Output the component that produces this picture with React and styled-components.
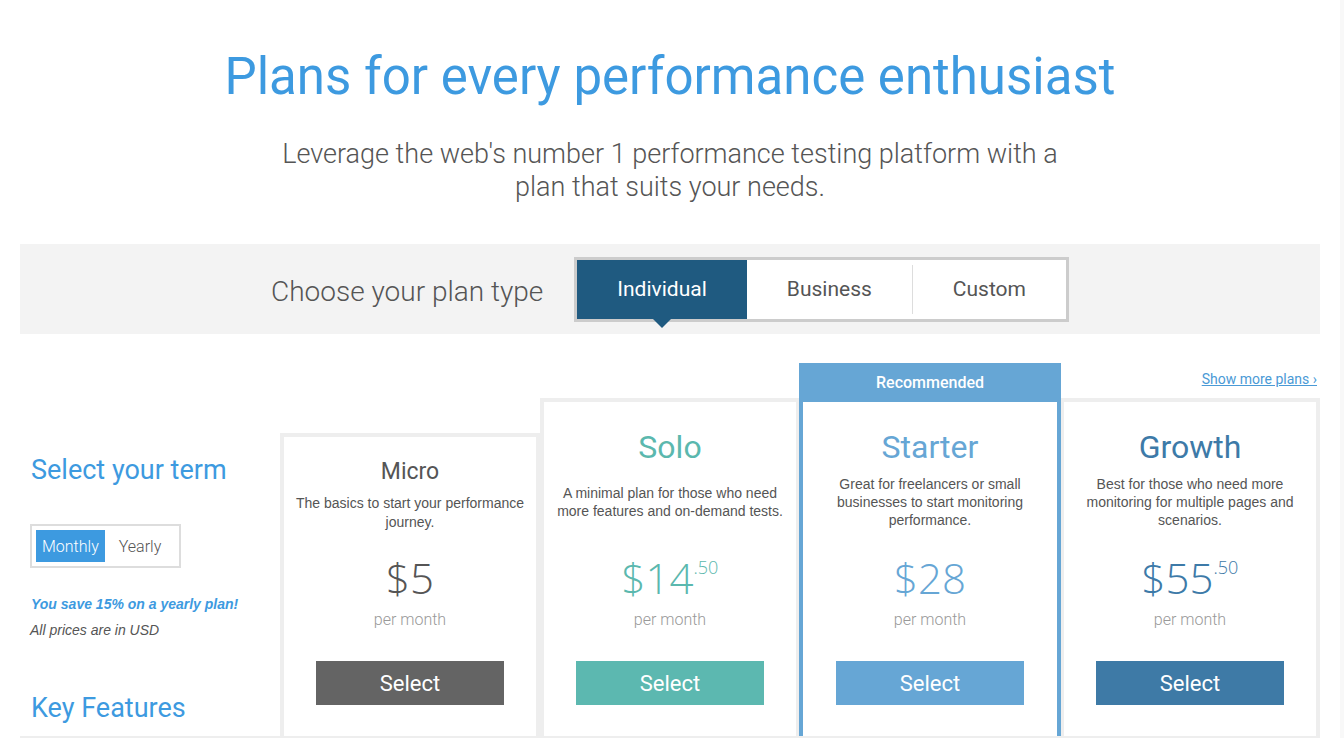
import React, { useState } from 'react'
import styled, { createGlobalStyle } from 'styled-components'

const GlobalStyle = createGlobalStyle`
    html, body {
        margin: 0;
        padding: 0;
        background: #f8f8f8;
    }
    body {
        font-family: Roboto, "Liberation Sans", sans-serif;
        overflow: hidden;
    }
`

const plans = [
    {
        name: 'Micro',
        small: true,
        desc: 'The basics to start your performance journey.',
        dollars: '5',
        color: '#555555',
        button: '#646464',
        height: 303,
    },
    {
        name: 'Solo',
        desc: 'A minimal plan for those who need more features and on-demand tests.',
        dollars: '14',
        cents: '.50',
        color: '#5bb8ae',
        button: '#5cb8b0',
        height: 338,
    },
    {
        name: 'Starter',
        featured: true,
        desc: 'Great for freelancers or small businesses to start monitoring performance.',
        dollars: '28',
        color: '#66a6d5',
        button: '#66a6d5',
        height: 334,
    },
    {
        name: 'Growth',
        more: true,
        desc: 'Best for those who need more monitoring for multiple pages and scenarios.',
        dollars: '55',
        cents: '.50',
        color: '#3d7aa8',
        button: '#3e7aa6',
        height: 338,
    },
]

function PlanCard({ plan }) {
    return (
        <Card height={plan.height} accent={plan.featured ? '#66a6d5' : '#eeeeee'} flat={plan.featured} small={plan.small}>
            <PlanName color={plan.color} small={plan.small}>{plan.name}</PlanName>
            <PlanDesc small={plan.small}>{plan.desc}</PlanDesc>
            <Bottom>
                <Price color={plan.color}>
                    <Amount>${plan.dollars}</Amount>
                    {plan.cents && <Cents>{plan.cents}</Cents>}
                </Price>
                <PerMonth>per month</PerMonth>
                <SelectButton bg={plan.button}>Select</SelectButton>
            </Bottom>
        </Card>
    )
}

function App() {
    const [planType, setPlanType] = useState('Individual')
    const [term, setTerm] = useState('Monthly')

    return (
        <Page>
            <GlobalStyle />
            <Hero>
                <Title>Plans for every performance enthusiast</Title>
                <Lead>Leverage the web's number 1 performance testing platform with a plan that suits your needs.</Lead>
            </Hero>

            <TypeBand>
                <BandLabel>Choose your plan type</BandLabel>
                <Tabs>
                    <Tab active={planType === 'Individual'} onClick={() => setPlanType('Individual')}>Individual</Tab>
                    <Tab active={planType === 'Business'} onClick={() => setPlanType('Business')}>Business</Tab>
                    <TabDivider />
                    <Tab active={planType === 'Custom'} onClick={() => setPlanType('Custom')}>Custom</Tab>
                </Tabs>
            </TypeBand>

            <PlansRow>
                <TermColumn>
                    <SideHeading>Select your term</SideHeading>
                    <TermToggle>
                        <TermOption active={term === 'Monthly'} onClick={() => setTerm('Monthly')}>Monthly</TermOption>
                        <TermOption active={term === 'Yearly'} onClick={() => setTerm('Yearly')}>Yearly</TermOption>
                    </TermToggle>
                    <Save>You save 15% on a yearly plan!</Save>
                    <Note>All prices are in USD</Note>
                    <SideHeading spaced>Key Features</SideHeading>
                </TermColumn>

                {plans.map(plan => (
                    <PlanColumn key={plan.name} featured={plan.featured}>
                        {plan.more && <MoreLink href="#">Show more plans ›</MoreLink>}
                        {plan.featured && <Ribbon>Recommended</Ribbon>}
                        <PlanCard plan={plan} />
                    </PlanColumn>
                ))}
            </PlansRow>
        </Page>
    )
}

export default App

const Page = styled.div`
    width: 1340px;
    height: 738px;
    background: #fff;
    overflow: hidden;
`

const Hero = styled.header`
    text-align: center;
    padding-top: 42px;
`

const Title = styled.h1`
    margin: 0;
    font-size: 51px;
    font-weight: 400;
    line-height: 70px;
    color: #3d9ae0;
`

const Lead = styled.p`
    width: 820px;
    margin: 26px auto 0;
    font-size: 27px;
    line-height: 33px;
    font-weight: 300;
    color: #555;
`

const TypeBand = styled.section`
    margin: 40px 20px 0;
    height: 90px;
    background: #f3f3f3;
    display: flex;
    align-items: center;
    justify-content: center;
    gap: 31px;
`

const BandLabel = styled.span`
    font-size: 28px;
    font-weight: 300;
    color: #555;
    padding-top: 4px;
`

const Tabs = styled.div`
    display: flex;
    height: 65px;
    box-sizing: border-box;
    border: 3px solid #cccccc;
    background: #fff;
`

const Tab = styled.div`
    position: relative;
    display: flex;
    align-items: center;
    padding: 0 40px;
    font-size: 21px;
    color: ${props => props.active ? '#fff' : '#555'};
    background: ${props => props.active ? '#1f5a80' : 'transparent'};
    cursor: pointer;
    &::after {
        content: '';
        display: ${props => props.active ? 'block' : 'none'};
        position: absolute;
        top: 100%;
        left: 50%;
        margin-left: -9px;
        border-left: 9px solid transparent;
        border-right: 9px solid transparent;
        border-top: 9px solid #1f5a80;
    }
`

const TabDivider = styled.div`
    width: 1px;
    margin: 5px 0;
    background: #dddddd;
`

const PlansRow = styled.section`
    margin: 29px 20px 0;
    display: flex;
    align-items: flex-end;
    border-bottom: 3px solid #eeeeee;
`

const TermColumn = styled.div`
    width: 260px;
    height: 303px;
    box-sizing: border-box;
    padding: 19px 0 0 10px;
    display: flex;
    flex-direction: column;
    align-items: flex-start;
`

const SideHeading = styled.h2`
    margin: ${props => props.spaced ? '50px' : '0'} 0 0 1px;
    font-size: 27px;
    font-weight: 400;
    line-height: 36px;
    color: #3d9ae0;
`

const TermToggle = styled.div`
    margin-top: 36px;
    display: flex;
    padding: 4px;
    border: 2px solid #dddddd;
`

const TermOption = styled.div`
    height: 32px;
    display: flex;
    align-items: center;
    padding: 0 ${props => props.active ? '6px' : '14px'};
    font-size: 16px;
    font-weight: 300;
    color: ${props => props.active ? '#fff' : '#555'};
    background: ${props => props.active ? '#3d9ae0' : 'transparent'};
    cursor: pointer;
`

const Save = styled.p`
    margin: 26px 0 0 1px;
    font-family: "Liberation Sans", Arial, sans-serif;
    font-size: 14px;
    line-height: 20px;
    font-weight: 700;
    font-style: italic;
    color: #3d9ae0;
`

const Note = styled.p`
    margin: 6px 0 0;
    font-family: "Liberation Sans", Arial, sans-serif;
    font-size: 14px;
    line-height: 20px;
    font-style: italic;
    color: #555;
`

const PlanColumn = styled.div`
    width: 260px;
    display: flex;
    flex-direction: column;
    align-items: stretch;
    position: relative;
    z-index: ${props => props.featured ? 1 : 0};
    margin: 0 ${props => props.featured ? '-1px' : '0'};
    width: ${props => props.featured ? '262px' : '260px'};
`

const MoreLink = styled.a`
    align-self: flex-end;
    margin: 0 3px 10px 0;
    font-size: 14px;
    line-height: 18px;
    color: #4a9ad6;
    text-decoration: underline;
`

const Ribbon = styled.div`
    height: 39px;
    display: flex;
    align-items: center;
    justify-content: center;
    background: #66a6d5;
    color: #fff;
    font-size: 16px;
    font-weight: 500;
`

const Card = styled.div`
    height: ${props => props.height}px;
    box-sizing: border-box;
    background: #fff;
    border: 4px solid ${props => props.accent};
    border-top-width: ${props => props.flat ? '0' : '4px'};
    border-bottom: none;
    padding-top: ${props => props.small ? '21px' : '25px'};
    display: flex;
    flex-direction: column;
    align-items: center;
    text-align: center;
`

const PlanName = styled.h3`
    margin: 0 0 ${props => props.small ? '0' : '8px'};
    font-size: ${props => props.small ? '23px' : '32px'};
    line-height: ${props => props.small ? '28px' : '40px'};
    font-weight: 400;
    color: ${props => props.color};
`

const PlanDesc = styled.p`
    margin: 0;
    width: 234px;
    height: 54px;
    display: flex;
    align-items: center;
    justify-content: center;
    font-family: "Liberation Sans", Arial, sans-serif;
    font-size: 14px;
    line-height: ${props => props.small ? '19px' : '18px'};
    color: #555;
`

const Bottom = styled.div`
    margin-top: auto;
    padding-bottom: 31px;
    display: flex;
    flex-direction: column;
    align-items: center;
`

const Price = styled.div`
    display: flex;
    align-items: flex-start;
    color: ${props => props.color};
    font-family: "Open Sans", Roboto, sans-serif;
    font-weight: 300;
`

const Amount = styled.span`
    font-size: 42px;
    line-height: 48px;
`

const Cents = styled.span`
    font-size: 18px;
    line-height: 18px;
    margin-top: 4px;
`

const PerMonth = styled.div`
    margin-top: 8px;
    font-size: 16px;
    line-height: 20px;
    font-weight: 300;
    color: #999;
`

const SelectButton = styled.button`
    margin-top: 31px;
    width: 188px;
    height: 44px;
    border: none;
    background: ${props => props.bg};
    color: #fff;
    font-family: Roboto, sans-serif;
    font-size: 22px;
    font-weight: 400;
    cursor: pointer;
`
